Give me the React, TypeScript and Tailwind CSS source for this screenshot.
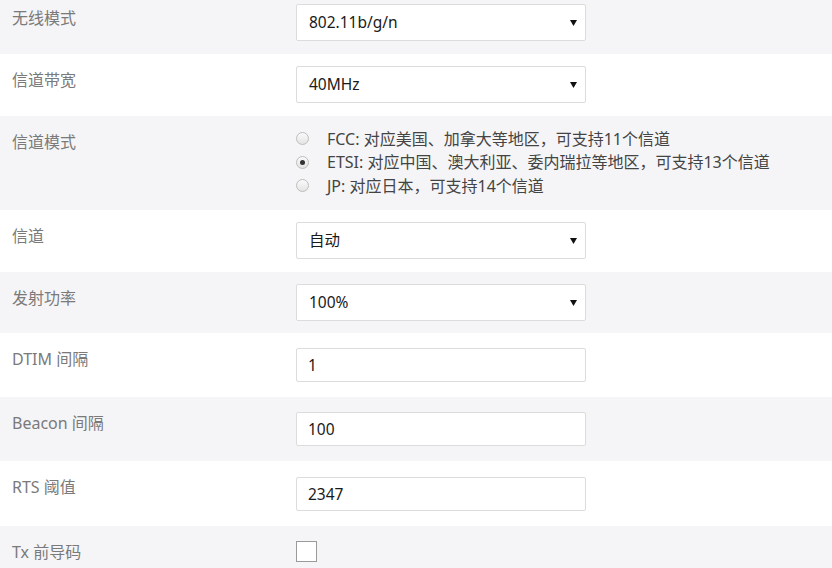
import React from "react";

const font = {
  fontFamily: '"Noto Sans", "Noto Sans CJK SC", sans-serif',
};

const Row = ({
  label,
  gray,
  children,
  className = "",
}: {
  label: string;
  gray?: boolean;
  children: React.ReactNode;
  className?: string;
}) => (
  <div className={`flex items-start ${gray ? "bg-[#f5f5f7]" : "bg-white"}`}>
    <div className="w-[296px] shrink-0 pl-3 pt-[15px] text-[16px] leading-[22px] text-[#7a7a7a]">
      {label}
    </div>
    <div className={`flex-1 ${className}`}>{children}</div>
  </div>
);

const Select = ({ value }: { value: string }) => (
  <div className="flex h-[37px] w-[290px] items-center justify-between rounded-[2px] border border-[#dcdcdc] bg-white pl-3 pr-[8px] text-[15.5px] text-[#1a1a1a]">
    <span>{value}</span>
    <svg width="7" height="6" viewBox="0 0 7 6">
      <path d="M0 0 L7 0 L3.5 6 Z" fill="#111" />
    </svg>
  </div>
);

const TextInput = ({ value }: { value: string }) => (
  <input
    readOnly
    defaultValue={value}
    className="block h-[34px] w-[290px] rounded-[2px] border border-[#dcdcdc] bg-white px-[11px] text-[15.5px] text-[#1a1a1a] outline-none"
  />
);

const Radio = ({ checked, text }: { checked?: boolean; text: string }) => (
  <div className="flex h-[23.5px] items-center">
    <span className="flex h-[13px] w-[13px] items-center justify-center rounded-full border border-[#bdbdbd] bg-gradient-to-b from-[#fafafa] to-[#e4e4e4]">
      {checked && <span className="h-[5px] w-[5px] rounded-full bg-[#333]" />}
    </span>
    <span className="ml-[18px] text-[16px] text-[#444]">{text}</span>
  </div>
);

export default function App() {
  return (
    <div style={font} className="-mt-[8px] w-[832px]">
      <Row label="无线模式" gray className="pt-3 pb-[13px]">
        <Select value="802.11b/g/n" />
      </Row>
      <Row label="信道带宽" className="pt-3 pb-[13px]">
        <Select value="40MHz" />
      </Row>
      <Row label="信道模式" gray className="h-[94px] pt-[11px]">
        <Radio text="FCC: 对应美国、加拿大等地区，可支持11个信道" />
        <Radio checked text="ETSI: 对应中国、澳大利亚、委内瑞拉等地区，可支持13个信道" />
        <Radio text="JP: 对应日本，可支持14个信道" />
      </Row>
      <Row label="信道" className="pt-3 pb-[13px]">
        <Select value="自动" />
      </Row>
      <Row label="发射功率" gray className="pt-3 pb-[12px]">
        <Select value="100%" />
      </Row>
      <Row label="DTIM 间隔" className="py-[15px]">
        <TextInput value="1" />
      </Row>
      <Row label="Beacon 间隔" gray className="py-[15px]">
        <TextInput value="100" />
      </Row>
      <Row label="RTS 阈值" className="pt-[16px] pb-[15px]">
        <TextInput value="2347" />
      </Row>
      <Row label="Tx 前导码" gray className="py-[15px]">
        <span className="block h-[21px] w-[21px] border border-[#9a9a9a] bg-white" />
      </Row>
    </div>
  );
}
